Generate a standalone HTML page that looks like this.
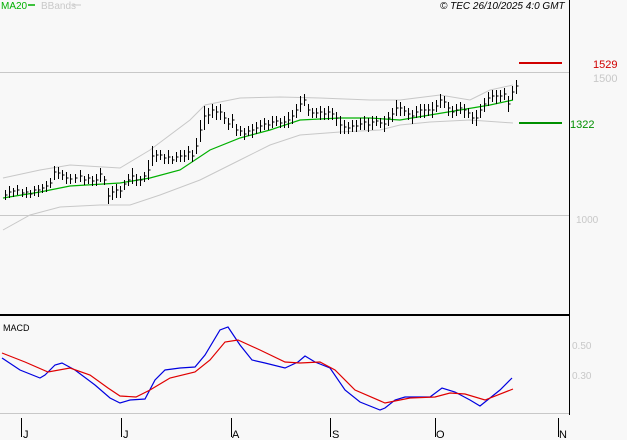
<!DOCTYPE html>
<html><head><style>
body{margin:0;background:#f8f8f8;}
svg{display:block;font-family:"Liberation Sans",sans-serif;}
</style></head><body>
<svg width="627" height="440" viewBox="0 0 627 440" xmlns="http://www.w3.org/2000/svg">
<rect width="627" height="440" fill="#f8f8f8"/>
<text x="1" y="9" font-size="10" fill="#00b000">MA20</text>
<line x1="28" y1="5" x2="35" y2="5" stroke="#00b000" stroke-width="1.5"/>
<text x="41" y="9" font-size="10" fill="#c8c8c8">BBands</text>
<line x1="73" y1="5" x2="81" y2="5" stroke="#c8c8c8"/>
<text x="440" y="9" font-size="10" font-style="italic" fill="#000">© TEC 26/10/2025 4:0 GMT</text>
<g shape-rendering="crispEdges">
<line x1="0" y1="72.5" x2="569" y2="72.5" stroke="#c8c8c8"/>
<line x1="0" y1="215.5" x2="569" y2="215.5" stroke="#c8c8c8"/>
<line x1="569.5" y1="0" x2="569.5" y2="415" stroke="#000"/>
<line x1="0" y1="315" x2="569" y2="315" stroke="#000" stroke-width="2"/>
<line x1="0" y1="413.5" x2="569" y2="413.5" stroke="#c8c8c8"/>
<line x1="519" y1="63" x2="562" y2="63" stroke="#d00000" stroke-width="2"/>
<line x1="519" y1="123" x2="562" y2="123" stroke="#009000" stroke-width="2"/>
</g>
<text x="593" y="68" font-size="11" fill="#d00000">1529</text>
<text x="593" y="82" font-size="11" fill="#c8c8c8">1500</text>
<text x="570" y="128" font-size="11" fill="#009000">1322</text>
<text x="576" y="223" font-size="10" fill="#c8c8c8">1000</text>
<text x="572" y="349" font-size="10" fill="#c8c8c8">0.50</text>
<text x="572" y="379" font-size="10" fill="#c8c8c8">0.30</text>
<polyline fill="none" stroke="#c8c8c8" points="3,178 40,170 70,165 120,168 150,150 190,120 205,105 240,98 280,97 320,98 370,100 400,100 440,95 470,100 490,90 513,85"/>
<polyline fill="none" stroke="#c8c8c8" points="3,230 30,215 60,207 100,205 130,205 160,195 200,180 240,160 270,145 300,135 340,132 380,130 400,125 430,122 470,120 513,123"/>
<polyline fill="none" stroke="#00b000" stroke-width="1.2" points="3,198 40,192 70,186 120,183 150,178 180,170 210,150 240,138 270,130 300,120 340,118 370,118 400,120 430,115 460,110 490,105 513,100"/>
<g stroke="#000" stroke-width="1" shape-rendering="crispEdges" transform="translate(0.5,0)">
<path d="M5,190v10M9,186v12M13,188v9M17,185v10M22,189v8M26,187v11M30,190v8M34,186v10M38,185v12M42,184v9M46,181v11M50,178v10M54,166v14M58,167v12M62,170v10M66,172v12M70,174v10M75,174v9M80,170v12M84,176v9M88,174v10M92,176v10M96,174v12M100,168v14M104,176v9M108,188v16M112,186v14M116,184v14M120,186v12M124,180v10M128,174v12M132,168v16M136,174v12M140,176v10M144,172v10M148,160v20M152,146v20M156,150v12M160,150v10M164,154v10M168,150v14M172,156v8M176,152v10M180,150v12M184,150v12M188,146v14M192,150v12M196,138v16M200,120v22M204,106v24M208,108v16M212,104v14M216,106v14M220,104v16M224,112v12M228,118v12M232,114v14M236,124v12M240,126v10M244,128v12M248,126v10M252,124v14M256,122v12M260,120v12M264,118v12M268,120v10M272,116v12M276,116v10M280,118v10M284,116v12M288,112v16M292,110v14M296,104v14M300,96v16M304,94v12M308,104v12M312,108v10M316,108v10M320,106v14M324,108v12M328,106v14M332,108v12M336,112v14M340,116v18M344,120v14M348,122v12M352,120v12M356,120v12M360,118v12M364,116v14M368,118v14M372,116v14M376,116v10M380,118v10M384,116v16M388,112v14M392,108v14M396,100v16M400,102v14M404,106v10M408,108v12M412,110v14M416,106v12M420,104v14M424,104v14M428,104v12M432,102v16M436,100v12M440,94v14M444,96v12M448,102v14M452,106v12M456,104v12M460,102v12M464,104v14M468,108v10M472,112v12M476,110v16M480,104v14M484,98v14M488,92v14M492,90v12M496,90v14M500,90v12M504,88v12M508,96v16M512,86v14M516,80v14"/>
<path d="M5,195h2M9,192h2M13,191h2M17,190h2M22,193h2M26,192h2M30,194h2M34,190h2M38,190h2M42,188h2M46,186h2M50,183h2M54,172h2M58,173h2M62,175h2M66,178h2M70,179h2M75,178h2M80,176h2M84,180h2M88,178h2M92,181h2M96,180h2M100,174h2M104,180h2M108,196h2M112,192h2M116,190h2M120,191h2M124,184h2M128,180h2M132,176h2M136,180h2M140,180h2M144,176h2M148,170h2M152,156h2M156,155h2M160,155h2M164,158h2M168,157h2M172,160h2M176,157h2M180,156h2M184,156h2M188,152h2M192,156h2M196,146h2M200,130h2M204,116h2M208,115h2M212,110h2M216,112h2M220,112h2M224,118h2M228,124h2M232,120h2M236,130h2M240,131h2M244,134h2M248,131h2M252,130h2M256,128h2M260,126h2M264,124h2M268,125h2M272,122h2M276,121h2M280,123h2M284,122h2M288,120h2M292,116h2M296,110h2M300,104h2M304,100h2M308,110h2M312,113h2M316,113h2M320,112h2M324,114h2M328,112h2M332,114h2M336,118h2M340,125h2M344,127h2M348,128h2M352,126h2M356,126h2M360,124h2M364,122h2M368,125h2M372,122h2M376,121h2M380,123h2M384,124h2M388,118h2M392,114h2M396,108h2M400,108h2M404,111h2M408,114h2M412,116h2M416,112h2M420,110h2M424,110h2M428,110h2M432,110h2M436,106h2M440,100h2M444,102h2M448,108h2M452,112h2M456,110h2M460,108h2M464,110h2M468,113h2M472,118h2M476,118h2M480,110h2M484,104h2M488,98h2M492,96h2M496,96h2M500,96h2M504,94h2M508,104h2M512,92h2M516,86h2"/>
</g>
<text x="3" y="331" font-size="9" fill="#000">MACD</text>
<polyline fill="none" stroke="#0000e0" stroke-width="1.2" points="2,358 20,370 40,378 45,375 55,365 62,363 75,370 95,385 110,398 120,403 130,400 145,399 155,380 165,370 180,368 195,367 205,355 220,330 228,327 240,345 252,360 265,363 285,368 298,362 305,356 315,362 330,368 345,390 360,402 380,410 385,408 395,400 405,397 430,397 442,388 455,392 470,400 480,406 490,398 500,390 512,378"/>
<polyline fill="none" stroke="#e00000" stroke-width="1.2" points="2,353 25,362 48,372 70,368 90,375 108,388 120,396 136,397 150,390 170,378 195,372 210,360 225,342 238,340 260,350 285,362 300,363 320,362 335,370 355,390 385,403 410,398 435,397 450,393 465,394 485,400 513,389"/>
<g stroke="#000" shape-rendering="crispEdges">
<line x1="21.5" y1="418" x2="21.5" y2="437"/><line x1="121.5" y1="418" x2="121.5" y2="437"/><line x1="231.5" y1="418" x2="231.5" y2="437"/><line x1="330.5" y1="418" x2="330.5" y2="437"/><line x1="435.5" y1="418" x2="435.5" y2="437"/><line x1="558.5" y1="418" x2="558.5" y2="437"/>
</g>
<g font-size="11" fill="#000">
<text x="23" y="438">J</text><text x="123" y="438">J</text><text x="232" y="438">A</text><text x="332" y="438">S</text><text x="436" y="438">O</text><text x="559" y="438">N</text>
</g>
</svg>
</body></html>
